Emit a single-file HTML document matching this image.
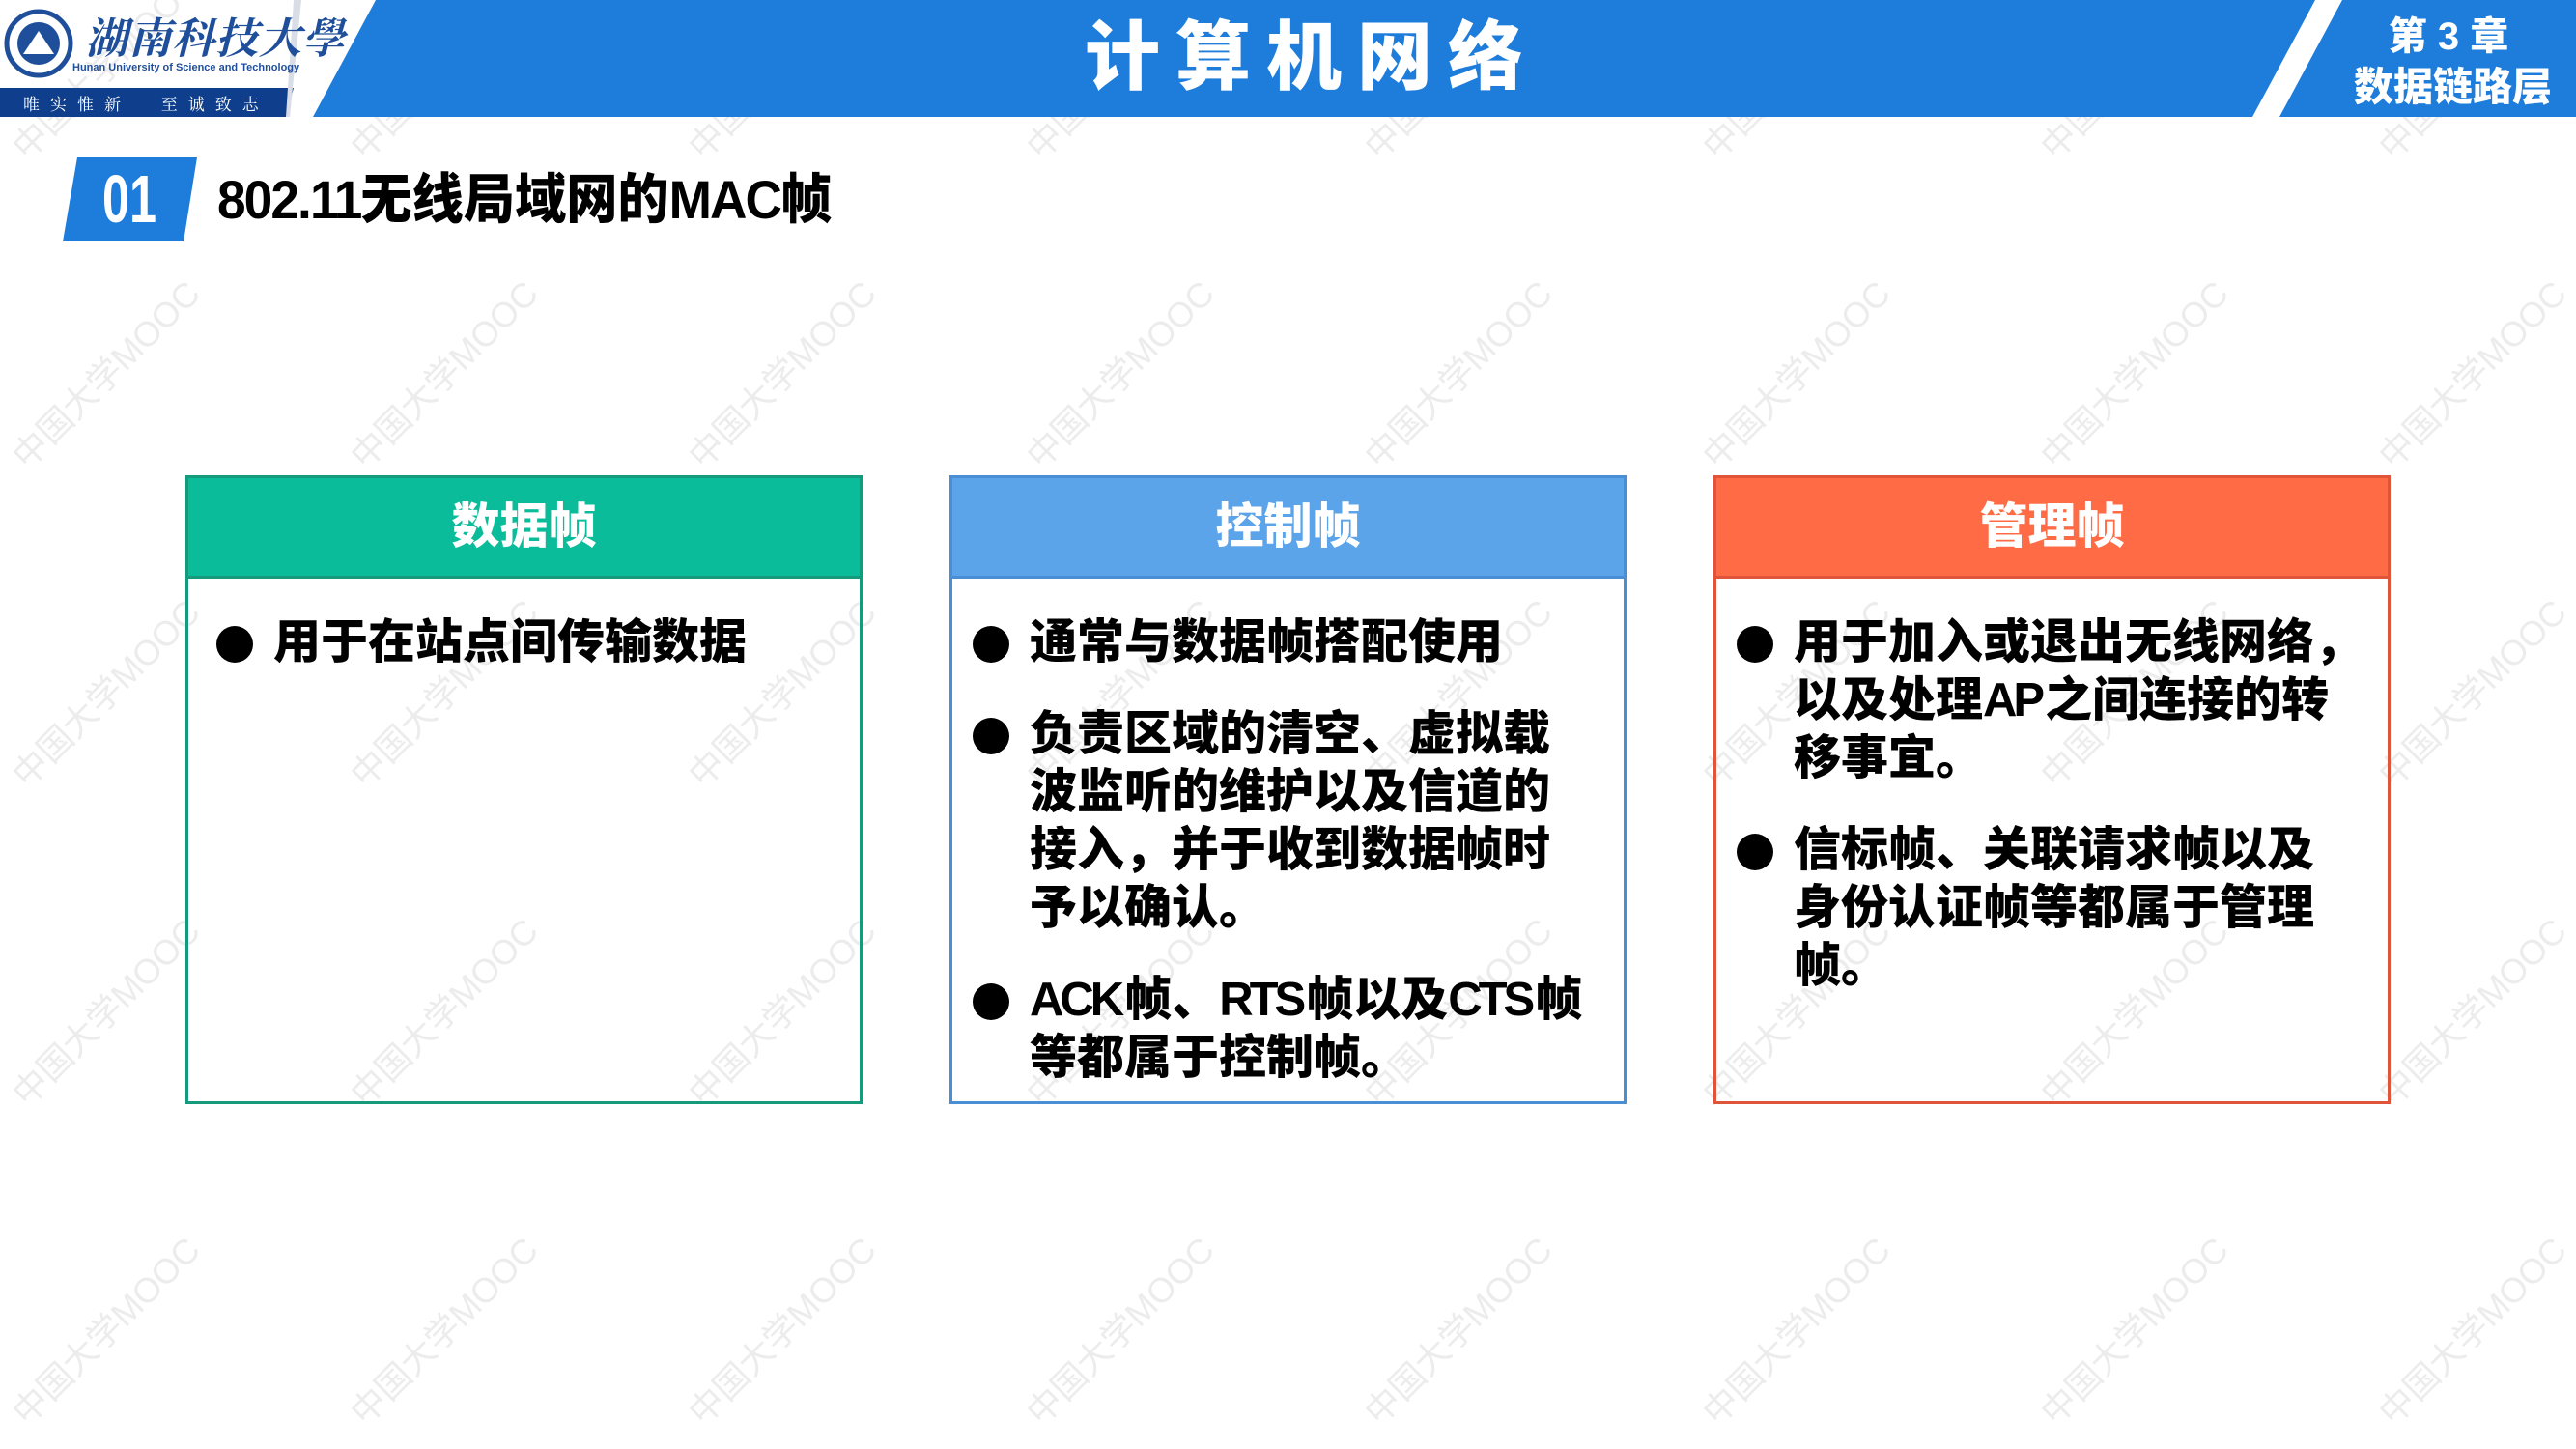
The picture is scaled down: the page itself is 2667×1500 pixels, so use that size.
<!DOCTYPE html>
<html><head><meta charset="utf-8"><style>
*{margin:0;padding:0;box-sizing:border-box}
body{width:2667px;height:1500px;position:relative;overflow:hidden;background:#fff;font-family:"Liberation Sans","Noto Sans CJK SC",sans-serif}
.abs{position:absolute}
.wm{position:absolute;color:#ececec;font-size:36px;transform:rotate(-45deg);white-space:nowrap;font-family:"Liberation Sans","Noto Sans CJK SC",sans-serif}
.card{position:absolute;top:492px;width:701px;height:651px;border:3px solid}
.card .hd{height:104px;color:#fff;font-size:50px;font-weight:900;text-align:center;line-height:100px;border-bottom:3px solid}
.card .bd{padding:36px 0 0 0;font-size:49px;font-weight:900;line-height:60px;color:#000}
.item{position:relative;padding-left:88px;margin-bottom:35px;white-space:nowrap}
.item:before{content:"";position:absolute;left:29px;top:13px;width:38px;height:38px;border-radius:50%;background:#000}
.c2 .item,.c3 .item{padding-left:80px}
.c2 .item:before,.c3 .item:before{left:21px}
.lt{letter-spacing:-4px;margin-right:4px}
</style></head><body>
<div class="wm" style="left:-20px;top:40px">中国大学MOOC</div>
<div class="wm" style="left:330px;top:40px">中国大学MOOC</div>
<div class="wm" style="left:680px;top:40px">中国大学MOOC</div>
<div class="wm" style="left:1030px;top:40px">中国大学MOOC</div>
<div class="wm" style="left:1380px;top:40px">中国大学MOOC</div>
<div class="wm" style="left:1730px;top:40px">中国大学MOOC</div>
<div class="wm" style="left:2080px;top:40px">中国大学MOOC</div>
<div class="wm" style="left:2430px;top:40px">中国大学MOOC</div>
<div class="wm" style="left:-20px;top:360px">中国大学MOOC</div>
<div class="wm" style="left:330px;top:360px">中国大学MOOC</div>
<div class="wm" style="left:680px;top:360px">中国大学MOOC</div>
<div class="wm" style="left:1030px;top:360px">中国大学MOOC</div>
<div class="wm" style="left:1380px;top:360px">中国大学MOOC</div>
<div class="wm" style="left:1730px;top:360px">中国大学MOOC</div>
<div class="wm" style="left:2080px;top:360px">中国大学MOOC</div>
<div class="wm" style="left:2430px;top:360px">中国大学MOOC</div>
<div class="wm" style="left:-20px;top:690px">中国大学MOOC</div>
<div class="wm" style="left:330px;top:690px">中国大学MOOC</div>
<div class="wm" style="left:680px;top:690px">中国大学MOOC</div>
<div class="wm" style="left:1030px;top:690px">中国大学MOOC</div>
<div class="wm" style="left:1380px;top:690px">中国大学MOOC</div>
<div class="wm" style="left:1730px;top:690px">中国大学MOOC</div>
<div class="wm" style="left:2080px;top:690px">中国大学MOOC</div>
<div class="wm" style="left:2430px;top:690px">中国大学MOOC</div>
<div class="wm" style="left:-20px;top:1020px">中国大学MOOC</div>
<div class="wm" style="left:330px;top:1020px">中国大学MOOC</div>
<div class="wm" style="left:680px;top:1020px">中国大学MOOC</div>
<div class="wm" style="left:1030px;top:1020px">中国大学MOOC</div>
<div class="wm" style="left:1380px;top:1020px">中国大学MOOC</div>
<div class="wm" style="left:1730px;top:1020px">中国大学MOOC</div>
<div class="wm" style="left:2080px;top:1020px">中国大学MOOC</div>
<div class="wm" style="left:2430px;top:1020px">中国大学MOOC</div>
<div class="wm" style="left:-20px;top:1350px">中国大学MOOC</div>
<div class="wm" style="left:330px;top:1350px">中国大学MOOC</div>
<div class="wm" style="left:680px;top:1350px">中国大学MOOC</div>
<div class="wm" style="left:1030px;top:1350px">中国大学MOOC</div>
<div class="wm" style="left:1380px;top:1350px">中国大学MOOC</div>
<div class="wm" style="left:1730px;top:1350px">中国大学MOOC</div>
<div class="wm" style="left:2080px;top:1350px">中国大学MOOC</div>
<div class="wm" style="left:2430px;top:1350px">中国大学MOOC</div>

<svg class="abs" style="left:0;top:0" width="2667" height="121">
<polygon points="389,0 2397,0 2332,121 324,121" fill="#1e7ddb"/>
<polygon points="2425,0 2667,0 2667,121 2360,121" fill="#1e7ddb"/>
<polygon points="0,91 304,91 296,121 0,121" fill="#0f3f8c"/>
<polygon points="304,0 312,0 300,121 296,121" fill="#d8dde6"/>
<circle cx="40" cy="45" r="33" fill="#fff" stroke="#1f4f9a" stroke-width="5"/>
<circle cx="40" cy="45" r="22" fill="#1f4f9a"/>
<path d="M24 56 L40 32 L56 56 Z" fill="#fff"/>
</svg>
<div class="abs" style="left:88px;top:4px;font-size:44px;color:#1f4f9a;font-family:'Noto Serif CJK SC',serif;font-weight:700;font-style:italic;letter-spacing:1px">湖南科技大學</div>
<div class="abs" style="left:75px;top:64px;font-size:11px;color:#1f4f9a;font-weight:700">Hunan University of Science and Technology</div>
<div class="abs" style="left:24px;top:94px;font-size:17px;color:#fff;letter-spacing:11px;font-family:'Noto Serif CJK SC',serif">唯实惟新 &nbsp;至诚致志</div>
<div class="abs" style="left:1006px;top:14px;width:704px;text-align:center;font-size:78px;font-weight:900;color:#fff;letter-spacing:16px;line-height:90px">计算机网络</div>
<div class="abs" style="left:2430px;top:14px;width:210px;text-align:center;font-size:40px;font-weight:900;color:#fff;line-height:48px">第 3 章</div>
<div class="abs" style="left:2432px;top:66px;width:215px;text-align:center;font-size:41px;font-weight:900;color:#fff;line-height:48px">数据链路层</div>

<svg class="abs" style="left:0;top:0" width="300" height="260"><polygon points="80,163 204,163 190,250 65,250" fill="#1e7ddb"/></svg>
<div class="abs" style="left:106px;top:166px;font-size:70px;font-weight:900;color:#fff;line-height:80px;transform:scaleX(0.72);transform-origin:left">01</div>
<div class="abs" style="left:225px;top:174px;font-size:56px;font-weight:900;color:#000;line-height:66px;transform:scaleX(0.95);transform-origin:left;white-space:nowrap"><span style="letter-spacing:-2px">802.11</span>无线局域网的<span style="letter-spacing:-2px">MAC</span>帧</div>

<div class="card" style="left:192px;border-color:#159a7c">
<div class="hd" style="background:#0abc9a;border-color:#159a7c">数据帧</div>
<div class="bd"><div class="item">用于在站点间传输数据</div></div>
</div>
<div class="card c2" style="left:983px;border-color:#4a8fd6">
<div class="hd" style="background:#5ba4ea;border-color:#4a8fd6">控制帧</div>
<div class="bd">
<div class="item">通常与数据帧搭配使用</div>
<div class="item">负责区域的清空、虚拟载<br>波监听的维护以及信道的<br>接入，并于收到数据帧时<br>予以确认。</div>
<div class="item"><span class="lt">ACK</span>帧、<span class="lt">RTS</span>帧以及<span class="lt">CTS</span>帧<br>等都属于控制帧。</div>
</div></div>
<div class="card c3" style="left:1774px;border-color:#e0553a">
<div class="hd" style="background:#ff6b45;border-color:#e0553a">管理帧</div>
<div class="bd">
<div class="item">用于加入或退出无线网络，<br>以及处理<span class="lt">AP</span>之间连接的转<br>移事宜。</div>
<div class="item">信标帧、关联请求帧以及<br>身份认证帧等都属于管理<br>帧。</div>
</div></div>
</body></html>
